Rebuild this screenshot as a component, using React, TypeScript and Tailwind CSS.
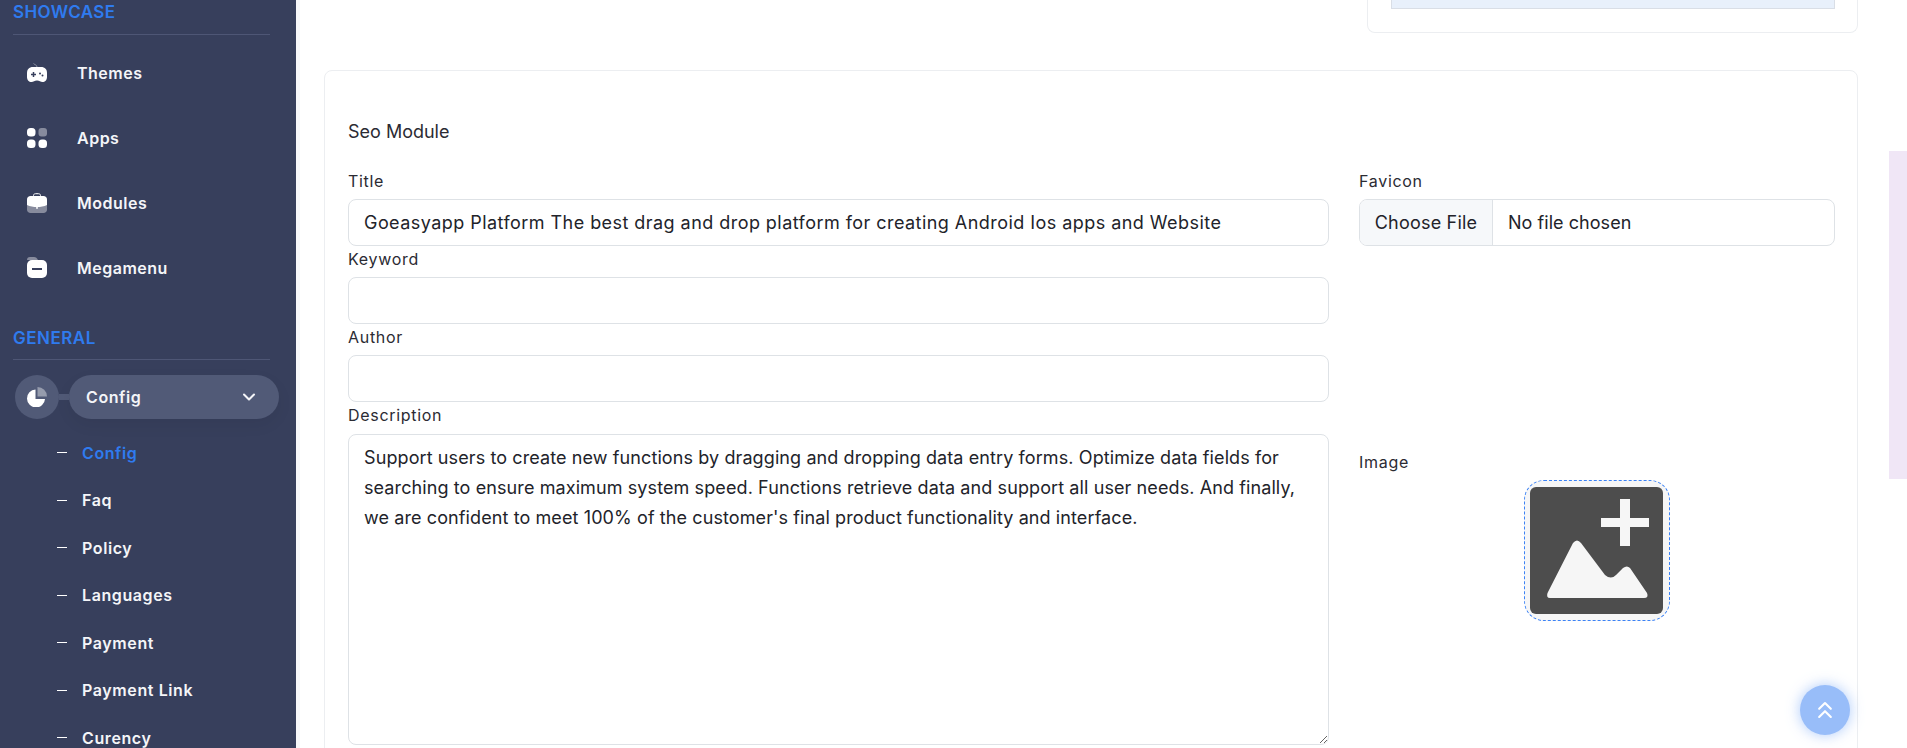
import React from 'react';
import { ChevronDown, ChevronsUp } from 'lucide-react';

const font = "font-['Inter','Liberation_Sans',sans-serif]";

const ThemesIcon = () => (
  <svg width="20" height="22" viewBox="0 0 20 22">
    <path d="M10 5C10 3 8 3 6.500 1.500" fill="none" stroke="#fff" strokeOpacity="0.4" strokeWidth="1" />
    <path fill="#fff" d="M6 5h8c4 0 6 2.500 6 6v4c0 3-2 5-4.500 5-2 0-3-1.500-5.500-1.500S6.500 20 4.500 20C2 20 0 18 0 15v-4c0-3.500 2-6 6-6Z" />
    <path stroke="#373f5c" strokeWidth="1.500" d="M4 12.500h5M6.500 10v5" />
    <circle cx="13" cy="11.500" r="1" fill="#373f5c" />
    <circle cx="15.500" cy="13.500" r="1" fill="#373f5c" />
  </svg>
);

const AppsIcon = () => (
  <svg width="20" height="20" viewBox="0 0 20 20" fill="#fff">
    <rect x="0" y="0" width="8.500" height="8.500" rx="3.500" />
    <rect x="11.500" y="0" width="8.500" height="8.500" rx="3" fillOpacity="0.4" />
    <rect x="0" y="11.500" width="8.500" height="8.500" rx="3.500" />
    <rect x="11.500" y="11.500" width="8.500" height="8.500" rx="3.500" />
  </svg>
);

const ModulesIcon = () => (
  <svg width="20" height="20" viewBox="0 0 20 20">
    <path d="M6.500 4V2.500C6.500 1.200 7.500.7 8.500.7h3c1 0 2 .5 2 1.800V4" fill="none" stroke="#fff" strokeWidth="1" />
    <path fill="#fff" fillOpacity="0.4" d="M0 11h20v5.500c0 2-1.500 3.500-3.500 3.500h-13C1.500 20 0 18.500 0 16.500Z" />
    <path fill="#fff" d="M3.500 3h13C18.500 3 20 4.500 20 6.500V12c-3 1.500-6.500 2-10 2S3 13.500 0 12V6.500C0 4.500 1.500 3 3.500 3Z" />
    <rect x="9.200" y="13" width="1.600" height="3" rx=".8" fill="#fff" />
  </svg>
);

const MegamenuIcon = () => (
  <svg width="20" height="21" viewBox="0 0 20 21">
    <path fill="#fff" fillOpacity="0.4" d="M3 0h4c2 0 3 1 4 3H0c0-2 1-3 3-3Z" />
    <rect x="0" y="3" width="20" height="18" rx="5" fill="#fff" />
    <rect x="5" y="11" width="10" height="2" fill="#373f5c" />
  </svg>
);

const PieIcon = () => (
  <svg width="20" height="20" viewBox="0 0 20 20" fill="#fff">
    <path d="M8.500 2.500v9.500h9.500a9 9 0 1 1-9.500-9.500Z" />
    <path fillOpacity="0.4" d="M10.500 0A9.500 9.500 0 0 1 20 9.500h-9.500Z" />
  </svg>
);

const NavItem = ({ icon, label }: { icon: React.ReactNode; label: string }) => (
  <div className="flex h-[65px] items-center pl-[27px]">
    <div className="flex w-[50px] shrink-0">{icon}</div>
    <span className="text-[16px] font-semibold tracking-[0.5px] text-[#f4f5f8]">{label}</span>
  </div>
);

const SubItem = ({ label, active }: { label: string; active?: boolean }) => (
  <div className="flex h-[47.500px] items-center pl-[57px]">
    <span className="mr-[15px] h-px w-[10px] bg-white" />
    <span className={`text-[16px] font-semibold tracking-[0.6px] ${active ? 'text-[#2f7bef]' : 'text-[#f4f5f8]'}`}>{label}</span>
  </div>
);

const labelClass = 'mb-[4px] h-[27px] text-[16px] leading-[27px] tracking-[0.7px] text-[#2b2b33]';

const Field = ({ label, value }: { label: string; value?: string }) => (
  <div className="flex flex-col">
    <label className={labelClass}>{label}</label>
    <input
      readOnly
      value={value ?? ''}
      className="h-[47px] w-full rounded-lg border border-[#dee2e6] bg-white px-[15px] text-[18px] tracking-[0.45px] text-[#22232a] outline-none"
    />
  </div>
);

const description =
  "Support users to create new functions by dragging and dropping data entry forms. Optimize data fields for searching to ensure maximum system speed. Functions retrieve data and support all user needs. And finally, we are confident to meet 100% of the customer's final product functionality and interface.";

export default function App() {
  return (
    <div className={`flex h-[748px] w-[1907px] overflow-hidden bg-white ${font}`}>
      <aside className="h-full w-[296px] shrink-0 overflow-hidden bg-[#373f5c]">
        <div className="mx-[13px] h-[35px] w-[257px] border-b border-[#4e5675] text-[17px] font-semibold leading-[24px] tracking-[0.4px] text-[#2f7bef]">
          SHOWCASE
        </div>
        <div className="mt-[5px]">
          <NavItem icon={<ThemesIcon />} label="Themes" />
          <NavItem icon={<AppsIcon />} label="Apps" />
          <NavItem icon={<ModulesIcon />} label="Modules" />
          <NavItem icon={<MegamenuIcon />} label="Megamenu" />
        </div>
        <div className="mx-[13px] mt-[26px] h-[34px] w-[257px] border-b border-[#4e5675] text-[17px] font-semibold leading-[24px] tracking-[0.5px] text-[#2f7bef]">
          GENERAL
        </div>
        <div className="ml-[15px] mt-[15px] flex h-[44px] w-[264px] items-center">
          <div className="flex h-[44px] w-[44px] shrink-0 items-center justify-center rounded-full bg-[#515a77]">
            <PieIcon />
          </div>
          <div className="h-[6px] w-[10px] bg-[#515a77]" />
          <div className="flex h-[44px] flex-1 items-center justify-between rounded-full bg-[#515a77] pl-[17px] pr-[20px] text-[16px] font-semibold tracking-[0.6px] text-[#f4f5f8] shadow-[0_6px_16px_rgba(0,0,0,0.06)]">
            Config
            <ChevronDown size={20} strokeWidth={2.5} />
          </div>
        </div>
        <div className="mt-[10px]">
          <SubItem label="Config" active />
          <SubItem label="Faq" />
          <SubItem label="Policy" />
          <SubItem label="Languages" />
          <SubItem label="Payment" />
          <SubItem label="Payment Link" />
          <SubItem label="Curency" />
        </div>
      </aside>

      <div className="h-[748px] w-[4px] shrink-0 bg-[#f6f7f9]" />

      <main className="relative h-full flex-1 overflow-hidden">
        <div className="absolute right-0 top-[151px] h-[328px] w-[18px] bg-[#f0e6f6]" />

        <div className="ml-auto mr-[49px] h-[33px] w-[491px] rounded-b-lg border border-t-0 border-[#eceef1] pl-[23px] pr-[22px]">
          <div className="h-[9px] border border-t-0 border-[#d9dee6] bg-[#e8f0fb]" />
        </div>

        <div className="ml-[24px] mr-[49px] mt-[37px] h-[700px] rounded-lg border border-[#eceef1] pl-[23px] pr-[22px] pt-[48px]">
          <h2 className="mb-[24px] h-[25px] text-[18px] leading-[25px] text-[#2b2b33]">Seo Module</h2>
          <div className="flex gap-[30px]">
            <div className="flex w-[981px] shrink-0 flex-col">
              <Field label="Title" value="Goeasyapp Platform The best drag and drop platform for creating Android Ios apps and Website" />
              <Field label="Keyword" />
              <Field label="Author" />
              <label className="mb-[5px] h-[27px] text-[16px] leading-[27px] tracking-[0.7px] text-[#2b2b33]">Description</label>
              <textarea
                readOnly
                value={description}
                className="h-[311px] w-full rounded-lg border border-[#dee2e6] bg-white px-[15px] py-[8px] text-[18px] leading-[30px] tracking-[0.1px] text-[#22232a] outline-none"
              />
            </div>
            <div className="flex flex-1 flex-col">
              <label className={labelClass}>Favicon</label>
              <div className="flex h-[47px] items-center overflow-hidden rounded-lg border border-[#dee2e6] text-[18px] text-[#22232a]">
                <div className="flex h-full w-[133px] items-center justify-center border-r border-[#dee2e6] bg-[#f6f8fa] tracking-[0.2px]">Choose File</div>
                <span className="pl-[15px] tracking-[0.05px]">No file chosen</span>
              </div>
              <label className="mb-[4px] mt-[203px] h-[27px] text-[16px] leading-[27px] tracking-[0.7px] text-[#2b2b33]">Image</label>
              <div className="ml-[165px] flex h-[141px] w-[146px] items-center justify-start rounded-[20px] border border-dashed border-[#3b82f6] bg-[#f6f6f6] pl-[5px]">
                <svg width="133" height="127" viewBox="0 0 133 127">
                  <rect width="133" height="127" rx="6" fill="#4d4d4d" />
                  <path fill="#f6f6f6" d="M90 12h10v19h19v9h-19v19H90V40H71v-9h19Z" />
                  <path fill="#f6f6f6" d="M17.500 106L43 56q4-5 8 0L75 88q6 5 11 0l7-7q4-3 7 0l17 25q2 5-3 5H20q-4 0-2.500-5Z" />
                </svg>
              </div>
            </div>
          </div>
        </div>

        <button className="absolute bottom-[13px] right-[57px] flex h-[50px] w-[50px] items-center justify-center rounded-full bg-[#98bdf9] text-white shadow-[0_0_14px_rgba(152,189,249,0.8)]">
          <ChevronsUp size={28} strokeWidth={1.8} />
        </button>
      </main>
    </div>
  );
}
